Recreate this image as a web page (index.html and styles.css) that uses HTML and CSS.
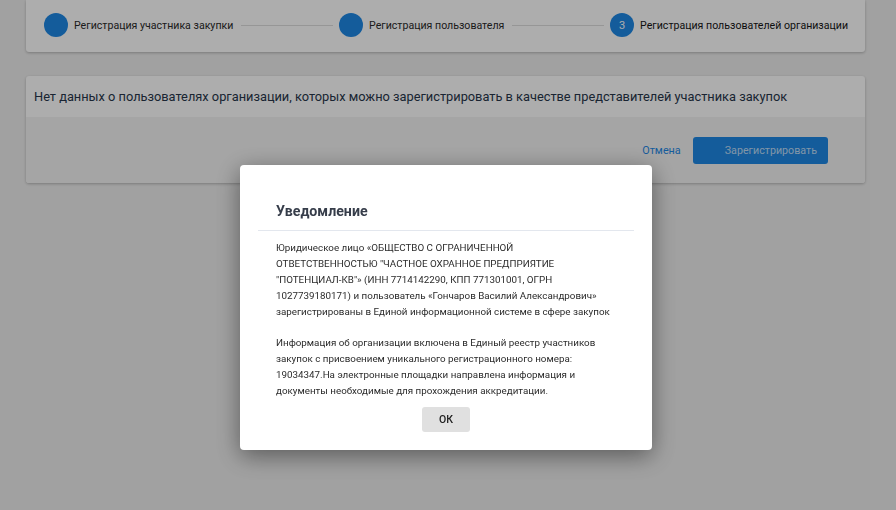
FILE: index.html
```html
<!DOCTYPE html>
<html lang="ru">
<head>
<meta charset="utf-8">
<title>Регистрация пользователей организации</title>
<link rel="stylesheet" href="styles.css">
</head>
<body>
<div class="page">
  <div class="card stepper">
    <div class="step">
      <span class="step-circle"></span>
      <span class="step-label">Регистрация участника закупки</span>
    </div>
    <div class="step-line"></div>
    <div class="step">
      <span class="step-circle"></span>
      <span class="step-label">Регистрация пользователя</span>
    </div>
    <div class="step-line"></div>
    <div class="step step-active">
      <span class="step-circle">3</span>
      <span class="step-label">Регистрация пользователей организации</span>
    </div>
  </div>

  <div class="card users">
    <div class="users-header">Нет данных о пользователях организации, которых можно зарегистрировать в качестве представителей участника закупок</div>
    <div class="users-actions">
      <a class="link-cancel">Отмена</a>
      <button class="btn-primary">Зарегистрировать</button>
    </div>
  </div>
</div>

<div class="overlay">
  <div class="modal">
    <div class="modal-header">Уведомление</div>
    <div class="modal-body">
      <p>Юридическое лицо «ОБЩЕСТВО С ОГРАНИЧЕННОЙ ОТВЕТСТВЕННОСТЬЮ "ЧАСТНОЕ ОХРАННОЕ ПРЕДПРИЯТИЕ "ПОТЕНЦИАЛ-КВ"» (ИНН 7714142290, КПП 771301001, ОГРН 1027739180171) и пользователь «Гончаров Василий Александрович» зарегистрированы в Единой информационной системе в сфере закупок</p>
      <p>Информация об организации включена в Единый реестр участников закупок с присвоением уникального регистрационного номера: 19034347.На электронные площадки направлена информация и документы необходимые для прохождения аккредитации.</p>
    </div>
    <div class="modal-footer">
      <button class="btn-ok">ОК</button>
    </div>
  </div>
</div>
</body>
</html>
```
FILE: styles.css
```css
* { box-sizing: border-box; }

html, body {
  margin: 0;
  height: 100%;
}

body {
  background: #eeeeee;
  font-family: Roboto, "Liberation Sans", Arial, sans-serif;
  color: #333;
}

.page {
  padding: 0 31px 0 26px;
}

.card {
  background: #ffffff;
  border-radius: 3px;
  box-shadow: 0 1px 3px rgba(0, 0, 0, 0.25);
}

/* Stepper */
.stepper {
  display: flex;
  align-items: center;
  height: 52px;
  padding: 1px 17px 3px 18px;
  border-radius: 0 0 3px 3px;
}

.step {
  display: flex;
  align-items: center;
  flex: none;
}

.step-circle {
  width: 24px;
  height: 24px;
  border-radius: 50%;
  background: #1e88e5;
  color: #ffffff;
  font-size: 11px;
  display: flex;
  align-items: center;
  justify-content: center;
}

.step-label {
  margin-left: 6px;
  font-size: 10.6px;
  color: #2a2a2a;
}

.step-active .step-label {
  color: #151515;
}

.step-line {
  flex: 1;
  height: 1px;
  background: #dddddd;
  margin: 0 6px 0 8px;
}

/* Users card */
.users {
  margin-top: 24px;
  overflow: hidden;
}

.users-header {
  height: 41px;
  display: flex;
  align-items: center;
  padding: 0 8px;
  font-size: 12.8px;
  color: #27354a;
  white-space: nowrap;
}

.users-actions {
  height: 66px;
  background: #f3f3f3;
  display: flex;
  align-items: center;
  justify-content: flex-end;
  padding-right: 37px;
}

.link-cancel {
  font-size: 10.8px;
  color: #1e88e5;
  margin-right: 12px;
  cursor: pointer;
}

.btn-primary {
  height: 27px;
  border: none;
  border-radius: 3px;
  background: #1e88e5;
  color: rgba(255, 255, 255, 0.72);
  font-family: inherit;
  font-size: 10.7px;
  padding: 0 11px 0 32px;
}

/* Modal */
.overlay {
  position: fixed;
  inset: 0;
  background: rgba(0, 0, 0, 0.32);
  display: flex;
  justify-content: center;
  align-items: flex-start;
  padding: 165px 4px 0 0;
}

.modal {
  width: 412px;
  height: 285px;
  background: #ffffff;
  border-radius: 4px;
  box-shadow: 0 6px 24px rgba(0, 0, 0, 0.45);
}

.modal-header {
  margin: 0 18px;
  padding: 36px 18px 9px;
  border-bottom: 1px solid #e3e7ee;
  font-size: 14.2px;
  line-height: 20px;
  font-weight: 700;
  color: #363d4a;
}

.modal-body {
  padding: 9px 36px 0;
  font-size: 9.8px;
  line-height: 16px;
  color: #2b2b2b;
}

.modal-body p {
  margin: 0 0 15px;
}

.modal-body p:last-child {
  margin-bottom: 0;
}

.modal-footer {
  display: flex;
  justify-content: center;
  padding-top: 8px;
}

.btn-ok {
  width: 48px;
  height: 25px;
  border: none;
  border-radius: 3px;
  background: #e0e0e0;
  color: #222;
  font-family: inherit;
  font-size: 10.5px;
  font-weight: 500;
}
```
